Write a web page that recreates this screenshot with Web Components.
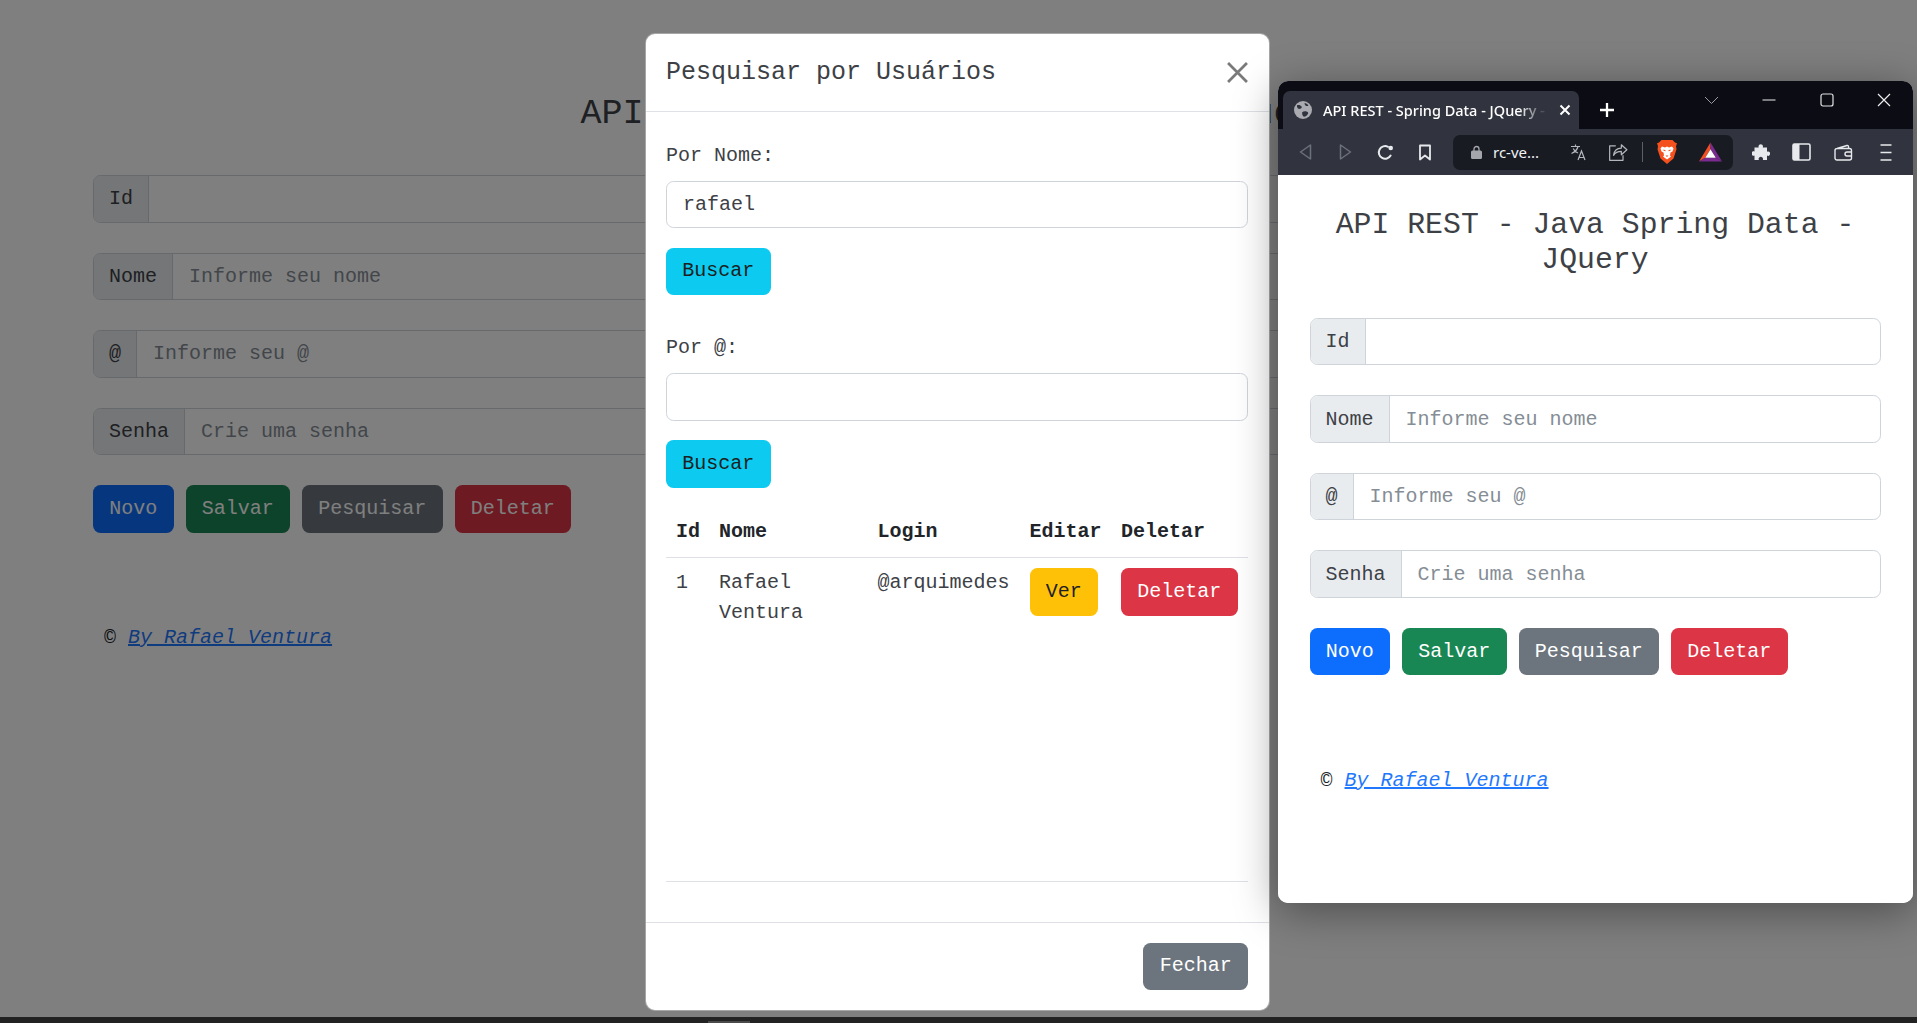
<!doctype html>
<html lang="pt">
<head>
<meta charset="utf-8">
<title>API REST - Spring Data - JQuery</title>
<style>
  html, body { margin: 0; height: 100%; background: #222; }
</style>
</head>
<body>
<app-desktop></app-desktop>

<script>
const MONO = '"Liberation Mono", "Courier New", monospace';
const INK = "#3d4146";

class AppButton extends HTMLElement {
  connectedCallback() {
    this.attachShadow({ mode: "open" });
    this.shadowRoot.innerHTML = `
      <style>
        :host {
          --bg: #6c757d;
          --fg: #fff;
          background: var(--bg);
          border-radius: 7.5px;
          box-sizing: border-box;
          color: var(--fg);
          display: inline-block;
          font: 20px/30px ${MONO};
          height: 47.5px;
          padding: 8.75px 16.25px;
          white-space: nowrap;
        }
        :host([variant="primary"]) { --bg: #0d6efd; }
        :host([variant="success"]) { --bg: #198754; }
        :host([variant="danger"]) { --bg: #dc3545; }
        :host([variant="info"]) { --bg: #0dcaf0; --fg: #1c1f22; }
        :host([variant="warning"]) { --bg: #ffc107; --fg: #1c1f22; }
      </style>
      <slot></slot>
    `;
  }
}
customElements.define("app-button", AppButton);

class TextField extends HTMLElement {
  connectedCallback() {
    const label = this.getAttribute("label");
    const hint = this.getAttribute("hint") || "";
    const value = this.getAttribute("value") || "";
    this.attachShadow({ mode: "open" });
    this.shadowRoot.innerHTML = `
      <style>
        :host {
          border: 1px solid #ced4da;
          border-radius: 7.5px;
          box-sizing: border-box;
          color: ${INK};
          display: flex;
          font: 20px/30px ${MONO};
          height: 47.5px;
          overflow: hidden;
        }
        .addon {
          background: #e9ecef;
          border-right: 1px solid #ced4da;
          padding: 8.25px 15px 7.25px;
        }
        .box {
          flex: 1;
          padding: 8.25px 16px 7.25px;
          white-space: nowrap;
        }
        .hint { color: #858d95; }
      </style>
      ${label ? `<span class="addon">${label}</span>` : ""}
      <span class="box ${value ? "" : "hint"}">${value || hint}</span>
    `;
  }
}
customElements.define("text-field", TextField);

// the CRUD form, shown both in the big page and in the small window
class CrudPage extends HTMLElement {
  connectedCallback() {
    this.attachShadow({ mode: "open" });
    this.shadowRoot.innerHTML = `
      <style>
        :host {
          background: #fff;
          box-sizing: border-box;
          color: ${INK};
          display: block;
          font: 20px/30px ${MONO};
          padding: var(--pad-top) var(--pad-right) 0 var(--pad-left);
        }
        h3 {
          font-size: var(--title-size);
          font-weight: 400;
          line-height: 1.2;
          margin: 0 0 var(--title-gap);
          text-align: center;
        }
        .fields { display: grid; gap: 30px; }
        .actions { display: flex; gap: 12px; margin-top: 30px; }
        footer { color: #212529; margin-top: 90.5px; padding-left: 11px; }
        a { color: #1f78fd; font-style: italic; }
      </style>
      <h3>API REST - Java Spring Data - JQuery</h3>
      <div class="fields">
        <text-field label="Id"></text-field>
        <text-field label="Nome" hint="Informe seu nome"></text-field>
        <text-field label="@" hint="Informe seu @"></text-field>
        <text-field label="Senha" hint="Crie uma senha"></text-field>
      </div>
      <div class="actions">
        <app-button variant="primary">Novo</app-button>
        <app-button variant="success">Salvar</app-button>
        <app-button variant="secondary">Pesquisar</app-button>
        <app-button variant="danger">Deletar</app-button>
      </div>
      <footer>© <a href="#">By Rafael Ventura</a></footer>
    `;
  }
}
customElements.define("crud-page", CrudPage);

class SearchBlock extends HTMLElement {
  connectedCallback() {
    this.attachShadow({ mode: "open" });
    this.shadowRoot.innerHTML = `
      <style>
        :host { display: block; }
        label { display: block; margin-bottom: 10px; }
        text-field { margin-bottom: 19.5px; }
      </style>
      <label>${this.getAttribute("label")}</label>
      <text-field value="${this.getAttribute("value") || ""}"></text-field>
      <app-button variant="info">Buscar</app-button>
    `;
  }
}
customElements.define("search-block", SearchBlock);

class SearchModal extends HTMLElement {
  connectedCallback() {
    this.attachShadow({ mode: "open" });
    this.shadowRoot.innerHTML = `
      <style>
        :host {
          background: #fff;
          border: 1px solid rgba(0, 0, 0, 0.35);
          border-radius: 10px;
          box-sizing: border-box;
          color: ${INK};
          display: flex;
          flex-direction: column;
          font: 20px/30px ${MONO};
          overflow: hidden;
        }
        header {
          align-items: center;
          border-bottom: 1px solid #dee2e6;
          display: flex;
          height: 77px;
          justify-content: space-between;
          padding: 0 21px 0 20px;
        }
        h5 { font-size: 25px; font-weight: 400; line-height: 37.5px; margin: 0; }
        .close { display: block; height: 21px; width: 21px; }
        main {
          display: flex;
          flex: 1;
          flex-direction: column;
          padding: 28.5px 21px 0 20px;
        }
        search-block + search-block { margin-top: 38px; }
        table {
          border-collapse: collapse;
          margin-top: 19.5px;
          table-layout: fixed;
          width: 582px;
        }
        th, td { padding: 10px; text-align: left; vertical-align: top; white-space: normal; }
        th { border-bottom: 1px solid #dee2e6; color: #212529; font-weight: 700; }
        hr {
          border: 0;
          border-top: 1px solid #dee2e6;
          margin: auto 0 40px;
          width: 100%;
        }
        footer {
          border-top: 1px solid #dee2e6;
          display: flex;
          justify-content: flex-end;
          padding: 20px 21px 20px 20px;
        }
      </style>
      <header>
        <h5>Pesquisar por Usuários</h5>
        <svg class="close" viewBox="0 0 20 20"><path d="M1 1l18 18M19 1L1 19" stroke="#7a7a7a" stroke-width="2.6" fill="none"/></svg>
      </header>
      <main>
        <search-block label="Por Nome:" value="rafael"></search-block>
        <search-block label="Por @:"></search-block>
        <table>
          <colgroup>
            <col style="width:43px"><col style="width:158.5px"><col style="width:152px"><col style="width:91.5px"><col style="width:137px">
          </colgroup>
          <thead>
            <tr><th>Id</th><th>Nome</th><th>Login</th><th>Editar</th><th>Deletar</th></tr>
          </thead>
          <tbody>
            <tr>
              <td>1</td>
              <td>Rafael Ventura</td>
              <td>@arquimedes</td>
              <td><app-button variant="warning">Ver</app-button></td>
              <td><app-button variant="danger">Deletar</app-button></td>
            </tr>
          </tbody>
        </table>
        <hr>
      </main>
      <footer><app-button variant="secondary">Fechar</app-button></footer>
    `;
  }
}
customElements.define("search-modal", SearchModal);

class BrowserWindow extends HTMLElement {
  connectedCallback() {
    const line = 'fill="none" stroke="currentColor" stroke-linecap="round" stroke-linejoin="round"';
    this.attachShadow({ mode: "open" });
    this.shadowRoot.innerHTML = `
      <style>
        :host {
          background: #fff;
          border-radius: 10px;
          box-shadow: 0 8px 44px rgba(0, 0, 0, 0.4);
          display: flex;
          flex-direction: column;
          overflow: hidden;
        }
        svg { display: block; flex: none; }
        .tabs {
          align-items: flex-end;
          background: #0b0c14;
          display: flex;
          flex: none;
          height: 48px;
          padding-left: 5px;
          position: relative;
        }
        .tab {
          align-items: center;
          background: #31343f;
          border-radius: 7px 7px 0 0;
          box-sizing: border-box;
          color: #fff;
          display: flex;
          font: 500 14.5px/20px "Noto Sans", "Open Sans", sans-serif;
          height: 38px;
          padding: 0 8px 0 11px;
          width: 296px;
        }
        .tab .name {
          flex: 1;
          margin-left: 11px;
          -webkit-mask-image: linear-gradient(90deg, #000 83%, rgba(0, 0, 0, 0.15) 93%);
          mask-image: linear-gradient(90deg, #000 83%, rgba(0, 0, 0, 0.15) 93%);
          white-space: nowrap;
        }
        .new { color: #fff; margin: 0 0 11px 20px; }
        .controls {
          align-items: center;
          color: #d9dade;
          display: flex;
          height: 38px;
          position: absolute;
          right: 0;
          top: 0;
        }
        .controls span { display: flex; justify-content: center; width: 57.5px; }
        .toolbar {
          align-items: center;
          background: #31343f;
          color: #e8e9ec;
          display: flex;
          flex: none;
          height: 46px;
          padding-left: 7px;
        }
        .cell { align-items: center; display: flex; justify-content: center; width: 40px; }
        .dim { color: #6d707b; }
        .url {
          align-items: center;
          background: #181b22;
          border-radius: 7px;
          display: flex;
          height: 35px;
          margin: 0 8px;
          width: 280px;
        }
        .url .addr {
          color: #f2f3f5;
          font: 400 15px/20px "Noto Sans", "Open Sans", sans-serif;
          margin-left: 11px;
          width: 66px;
        }
        .url .lock { margin-left: 18px; }
        .url .sep { background: #5c5f68; height: 20px; margin: 0 4px; width: 1px; }
        .soft { color: #b4b6bc; }
        crud-page { flex: 1; }
      </style>
      <div class="tabs">
        <div class="tab">
          <svg width="18" height="18" viewBox="0 0 18 18"><circle cx="9" cy="9" r="9" fill="#a9abb1"/><path d="M3 4.200c2-.6 3.800.1 4.600 1.400.6 1-.2 1.800-1.200 2.200-1 .3-2 .2-2.600-.6C3.300 6.500 2.800 5.300 3 4.200zM8 11.500c1.200-1.100 3-1.600 5-.8 1 .4 1.400 1 1.100 1.800-.7 1.800-2.300 3-4.200 3.300-.9-.6-1.500-1.600-1.700-2.500-.1-.7.200-1.300-.2-1.800zM10.500 2c1.500.3 3 1.200 4 2.500-1 .8-2.300.8-3 .1-.600-.6-.900-1.600-1-2.600z" fill="#31343f"/></svg>
          <span class="name">API REST - Spring Data - JQuery -</span>
          <svg width="12" height="12" viewBox="0 0 12 12"><path d="M1.500 1.500l9 9M10.500 1.500l-9 9" stroke="#fff" stroke-width="2" fill="none"/></svg>
        </div>
        <svg class="new" width="16" height="16" viewBox="0 0 16 16"><path d="M8 1v14M1 8h14" stroke="#fff" stroke-width="2.300" fill="none"/></svg>
        <div class="controls">
          <span><svg width="15" height="9" viewBox="0 0 15 9"><path d="M1 1l6.500 6.500L14 1" stroke="#9a9ca3" fill="none"/></svg></span>
          <span><svg width="14" height="14" viewBox="0 0 14 14"><path d="M.5 7h13" stroke="#eee" stroke-width="1.200"/></svg></span>
          <span><svg width="14" height="14" viewBox="0 0 14 14"><rect x="1" y="1" width="12" height="12" rx="2" fill="none" stroke="#e4e4e6" stroke-width="1.200"/></svg></span>
          <span><svg width="14" height="14" viewBox="0 0 14 14"><path d="M1 1l12 12M13 1L1 13" stroke="#eee" stroke-width="1.200"/></svg></span>
        </div>
      </div>
      <div class="toolbar">
        <span class="cell dim"><svg width="13" height="16" viewBox="0 0 13 16"><path d="M11.500 1v14L1.500 8z" ${line} stroke-width="1.500"/></svg></span>
        <span class="cell dim"><svg width="13" height="16" viewBox="0 0 13 16"><path d="M1.500 1v14l10-7z" ${line} stroke-width="1.500"/></svg></span>
        <span class="cell"><svg width="17" height="17" viewBox="0 0 17 17"><path d="M13.600 11.500A6.300 6.300 0 1 1 11 2.800" ${line} stroke-width="2"/><circle cx="13.700" cy="4" r="2.300" fill="currentColor"/></svg></span>
        <span class="cell"><svg width="14" height="17" viewBox="0 0 14 17"><path d="M2 1.500h10v14L7 11.500l-5 4z" ${line} stroke-width="1.800"/></svg></span>
        <div class="url">
          <svg class="lock" width="11" height="14" viewBox="0 0 11 14"><path d="M3 6V4a2.500 2.500 0 0 1 5 0v2" fill="none" stroke="#a4a6ac" stroke-width="1.300"/><rect y="5.500" width="11" height="8.500" rx="1.500" fill="#a4a6ac"/></svg>
          <span class="addr">rc-ve...</span>
          <span class="cell soft"><svg width="18" height="18" viewBox="0 0 18 18"><path d="M1 3.500h9M5.500 1.500v2M8 3.500C7.300 6.500 5 9 1.500 10.500M3.200 5.500C4 7.500 5.500 9 8 10M8 17l3.500-9 3.500 9M9.200 14.500h4.600" fill="none" stroke="currentColor" stroke-width="1.200"/></svg></span>
          <span class="cell soft"><svg width="20" height="20" viewBox="0 0 18 18"><path d="M7 3.500H1.500v13h12V12M5 12c.5-4 3-6.500 7-6.500V2.500L17 7l-5 4.500V8.500c-3 0-5.500 1-7 3.500z" fill="none" stroke="currentColor" stroke-width="1.100" stroke-linejoin="round"/></svg></span>
          <span class="sep"></span>
          <span class="cell"><svg width="20" height="24" viewBox="0 0 20 24"><path d="M4.500 0h11L18 2.500l2 .800-1 3 .500 3-3 9.200-6.500 5.500L3.500 18.500.500 9.300l.500-3-1-3 2-.800z" fill="#f4511e"/><path d="M5 6.500l3 1 2-1 2 1 3-1 1.500 2-1 3-2 1-.500 3 1 1-4 3-4-3 1-1-.500-3-2-1-1-3z" fill="#fff"/><path d="M6.500 9.500l2 .800v1l-2-.500zM13.500 9.500l-2 .800v1l2-.500zM8.500 15.500h3L10 17z" fill="#f4511e"/></svg></span>
          <span class="cell" style="width:46px"><svg width="23" height="20" viewBox="0 0 24 20"><path d="M12 0L0 20l6.500-4L12 7z" fill="#f04e23"/><path d="M12 0l12 20-6.500-4L12 7z" fill="#7a2b8f"/><path d="M0 20h24l-6.500-4h-11z" fill="#7a2b8f"/><path d="M12 7l5.500 9h-11z" fill="#fff"/></svg></span>
        </div>
        <span class="cell"><svg width="18" height="18" viewBox="0 0 18 18"><path d="M6.500 3a2.300 2.300 0 0 1 4.500 0c0 .5-.2 1-.2 1.500H15v4.200c.5-.200 1-.400 1.500-.200a2.300 2.300 0 0 1 0 4.400c-.5.100-1-.1-1.500-.3V17H10.800c.2-.5.400-1 .2-1.500a2.300 2.300 0 0 0-4.400 0c-.1.500.1 1 .3 1.500H2.500v-4.500c-.5.200-1 .400-1.400.200a2.300 2.300 0 0 1 0-4.400c.4-.1.900.1 1.400.3V4.500h4.200c-.1-.5-.3-1-.2-1.500z" fill="currentColor"/></svg></span>
        <span class="cell"><svg width="19" height="18" viewBox="0 0 19 18"><rect x="1" y="1" width="17" height="16" rx="1.500" fill="none" stroke="currentColor" stroke-width="1.600"/><rect x="1" y="1" width="6.500" height="16" fill="currentColor"/></svg></span>
        <span class="cell" style="width:44px"><svg width="19" height="17" viewBox="0 0 19 17"><path d="M3 4.500L13 1.500c1-.3 1.500.3 1.500 1.500v1.500M3 4.500h12.500a2 2 0 0 1 2 2V14a2 2 0 0 1-2 2H3a2 2 0 0 1-2-2V6.500a2 2 0 0 1 2-2z" fill="none" stroke="currentColor" stroke-width="1.400"/><path d="M18 8h-5a2 2 0 0 0 0 4h5" fill="none" stroke="currentColor" stroke-width="1.400"/></svg></span>
        <span class="cell" style="width:42px"><svg width="12" height="17" viewBox="0 0 12 17"><path d="M.5 1h11M.5 8.500h11M.5 16h11" stroke="currentColor" stroke-width="1.700"/></svg></span>
      </div>
      <crud-page style="--pad-top:32.5px;--pad-left:31.5px;--pad-right:32.5px;--title-size:29.8px;--title-gap:38.75px"></crud-page>
    `;
  }
}
customElements.define("browser-window", BrowserWindow);

class AppDesktop extends HTMLElement {
  connectedCallback() {
    this.attachShadow({ mode: "open" });
    this.shadowRoot.innerHTML = `
      <style>
        :host {
          display: grid;
          grid-template-rows: 1017px 6px;
          height: 1023px;
          overflow: hidden;
          position: relative;
        }
        .stage { overflow: hidden; position: relative; }
        crud-page { height: 100%; }
        .backdrop { background: rgba(0, 0, 0, 0.5); inset: 0; position: absolute; }
        search-modal { height: 978px; left: 645px; position: absolute; top: 33px; width: 625px; }
        browser-window { height: 822px; left: 1278px; position: absolute; top: 81px; width: 635px; }
        .taskbar { background: #222; display: flex; padding-left: 708px; }
        .taskbar i { align-self: flex-end; background: #4a4a4a; height: 2px; width: 42px; }
      </style>
      <div class="stage">
        <crud-page style="--pad-top:92.5px;--pad-left:93px;--pad-right:93px;--title-size:35px;--title-gap:40.5px"></crud-page>
        <div class="backdrop"></div>
        <search-modal></search-modal>
        <browser-window></browser-window>
      </div>
      <div class="taskbar"><i></i></div>
    `;
  }
}
customElements.define("app-desktop", AppDesktop);
</script>
</body>
</html>
